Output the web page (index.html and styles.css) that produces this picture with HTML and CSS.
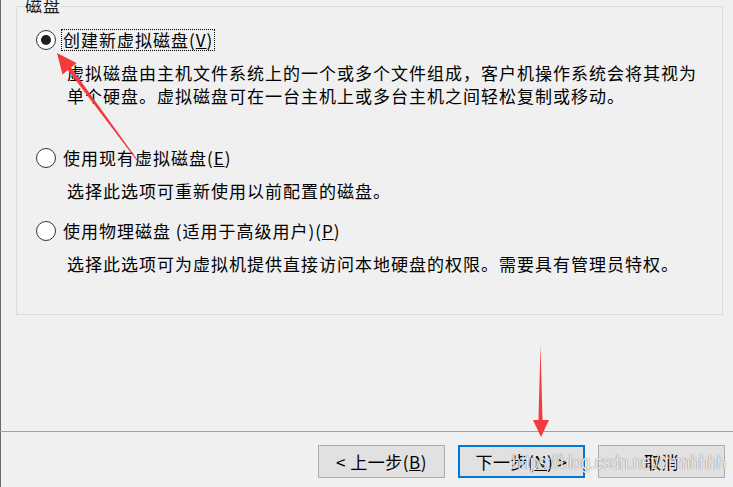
FILE: index.html
```html
<!DOCTYPE html>
<html lang="zh-CN">
<head>
<meta charset="utf-8">
<link rel="stylesheet" href="styles.css">
</head>
<body>
<div class="dialog">
  <div class="main">
    <div class="group">
      <span class="legend">磁盘</span>
      <div class="option">
        <div class="row">
          <span class="radio checked"></span>
          <span class="label focus">创建新虚拟磁盘(<u>V</u>)</span>
        </div>
        <div class="desc tall">虚拟磁盘由主机文件系统上的一个或多个文件组成，客户机操作系统会将其视为<br>单个硬盘。虚拟磁盘可在一台主机上或多台主机之间轻松复制或移动。</div>
      </div>
      <div class="option">
        <div class="row">
          <span class="radio"></span>
          <span class="label">使用现有虚拟磁盘(<u>E</u>)</span>
        </div>
        <div class="desc">选择此选项可重新使用以前配置的磁盘。</div>
      </div>
      <div class="option">
        <div class="row">
          <span class="radio"></span>
          <span class="label">使用物理磁盘 (适用于高级用户)(<u>P</u>)</span>
        </div>
        <div class="desc">选择此选项可为虚拟机提供直接访问本地硬盘的权限。需要具有管理员特权。</div>
      </div>
    </div>
  </div>
  <div class="footer">
    <button class="btn">&lt; 上一步(<u>B</u>)</button>
    <button class="btn default">下一步(<u>N</u>) &gt;</button>
    <button class="btn">取消</button>
  </div>
</div>
<div class="watermark">https://blog.csdn.net/dhmhhhh</div>
<svg class="arrows" width="733" height="487" viewBox="0 0 733 487">
  <polygon fill="#f43a3a" points="57,53 62.5,74.5 67.9,69.9 136.6,160.3 137.4,159.7 71.1,67.4 76.5,63"/>
  <polygon fill="#f43a3a" points="540.5,345 542.5,420 549,420 541,437 533,420 538.5,420"/>
</svg>
</body>
</html>
```
FILE: styles.css
```css
html, body {
  margin: 0;
  padding: 0;
  background: #f0f0f0;
}
body {
  width: 733px;
  height: 487px;
  overflow: hidden;
  position: relative;
  font-family: "Noto Sans CJK SC", "Liberation Sans", sans-serif;
  color: #000;
}
.dialog {
  height: 487px;
  border-left: 1px solid #6b6b6b;
  display: flex;
  flex-direction: column;
  box-sizing: border-box;
}
.main {
  flex: 1;
  padding-top: 6px;
  padding-left: 15px;
}
.group {
  position: relative;
  width: 707px;
  height: 309px;
  box-sizing: border-box;
  border: 1px solid #dcdcdc;
  padding: 22px 0 0 19px;
}
.legend {
  position: absolute;
  top: -11px;
  left: 8px;
  background: #f0f0f0;
  font-size: 17px;
  letter-spacing: 1px;
  line-height: 18px;
  color: #1a1a1a;
}
.option {
  margin-bottom: 18px;
}
.row {
  display: flex;
  align-items: center;
  height: 22px;
}
.radio {
  width: 20px;
  height: 20px;
  box-sizing: border-box;
  border: 1.5px solid #333;
  border-radius: 50%;
  background: #fff;
  display: flex;
  align-items: center;
  justify-content: center;
  flex: none;
}
.radio.checked::after {
  content: "";
  width: 10px;
  height: 10px;
  border-radius: 50%;
  background: #1f1f1f;
}
.label {
  margin-left: 5px;
  height: 22px;
  box-sizing: border-box;
  border: 1px solid transparent;
  padding: 0 1px;
  font-size: 17px;
  letter-spacing: 1px;
  line-height: 20px;
  white-space: nowrap;
}
.label.focus {
  border: 1px dotted #000;
}
.desc {
  margin-top: 10px;
  margin-left: 31px;
  font-size: 17px;
  letter-spacing: 1px;
  line-height: 23px;
  white-space: nowrap;
}
.desc.tall {
  min-height: 68px;
}
.footer {
  border-top: 1px solid #a0a0a0;
  margin-left: -1px;
  height: 56px;
  box-sizing: border-box;
  padding: 13px 8px 0 0;
  display: flex;
  justify-content: flex-end;
  align-items: flex-start;
  gap: 13px;
}
.btn {
  width: 127px;
  height: 33px;
  box-sizing: border-box;
  background: #e1e1e1;
  border: 1px solid #adadad;
  font-family: "Noto Sans CJK SC", "Liberation Sans", sans-serif;
  font-size: 17px;
  letter-spacing: 0.5px;
  color: #000;
  padding: 0;
  line-height: 30px;
}
.btn.default {
  border: 2px solid #0078d7;
}
.watermark {
  position: absolute;
  left: 512px;
  top: 450px;
  font-family: "Liberation Sans", sans-serif;
  font-size: 21px;
  line-height: 24px;
  color: rgba(255, 255, 255, 0.92);
  text-shadow: 0 0 1px rgba(0, 0, 0, 0.45), 0 0 1px rgba(0, 0, 0, 0.3);
  transform: scaleX(0.76);
  transform-origin: left top;
  white-space: nowrap;
  pointer-events: none;
}
.arrows {
  position: absolute;
  left: 0;
  top: 0;
  pointer-events: none;
}
```
